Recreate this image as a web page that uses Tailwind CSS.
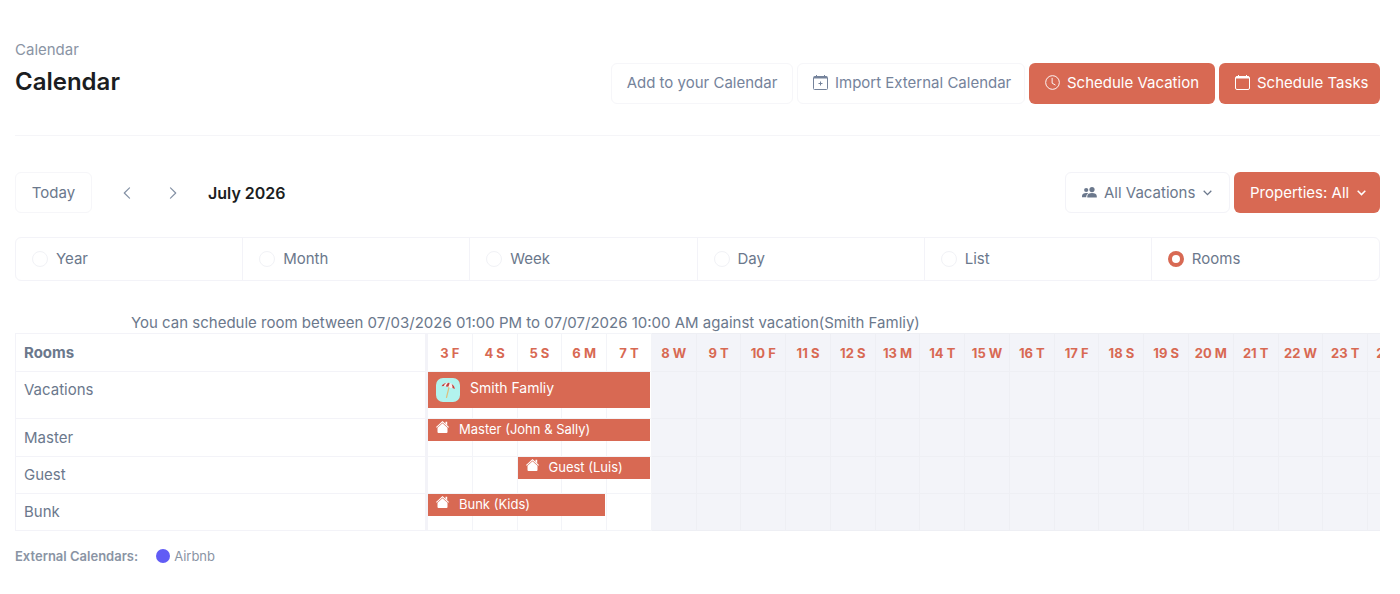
<!DOCTYPE html>
<html lang="en">
<head>
<meta charset="utf-8">
<meta name="viewport" content="width=device-width, initial-scale=1">
<title>Calendar</title>
<script src="https://cdn.jsdelivr.net/npm/@tailwindcss/browser@4"></script>
</head>
<body class="bg-white font-[Inter,'Liberation_Sans',sans-serif] text-[15px] leading-5 text-[#6b788c]">
<main class="pt-10 pr-5 pl-[15px]">
  <header class="flex items-end justify-between border-b border-[#f5f5f8] pb-[31px]">
    <div class="pb-1">
      <nav aria-label="Breadcrumb"><a href="#" class="text-[#8a94a4]">Calendar</a></nav>
      <h1 class="mt-1 text-2xl leading-9 font-semibold text-[#1b1d21]">Calendar</h1>
    </div>
    <div class="flex gap-1">
      <button class="flex h-[41px] w-[182px] items-center justify-center rounded-md border border-[#f6f6f9] pb-0.5 text-[#75839b] whitespace-nowrap">Add to your Calendar</button>
      <button class="flex h-[41px] w-[228px] items-center gap-[7px] rounded-md border border-[#f6f6f9] pb-0.5 pl-[15px] text-[#75839b] whitespace-nowrap">
        <svg class="size-[15px] shrink-0" viewBox="0 0 15 15" fill="none" stroke="currentColor"><rect x=".5" y="1.500" width="14" height="13" rx="1"/><path d="M1 2.500h13" stroke-width="2"/><path d="M3.500 0v2M11.500 0v2M7.500 6.500v4M5.500 8.500h4"/></svg>
        Import External Calendar</button>
      <button class="flex h-[41px] w-[186px] items-center gap-[7px] rounded-md bg-[#d86953] pb-0.5 pl-4 text-white whitespace-nowrap">
        <svg class="size-[15px] shrink-0" viewBox="0 0 16 16" fill="none" stroke="currentColor"><circle cx="8" cy="8" r="7.3"/><path d="M7.6 3.5v5.2l3.2 1.9" stroke-linecap="round"/></svg>
        Schedule Vacation</button>
      <button class="flex h-[41px] w-[161px] items-center gap-[7px] rounded-md bg-[#d86953] pb-0.5 pl-4 text-white whitespace-nowrap">
        <svg class="size-[15px] shrink-0" viewBox="0 0 15 15" fill="none" stroke="currentColor"><rect x=".5" y="1.500" width="14" height="13" rx="1.500"/><path d="M1 2.500h13" stroke-width="2"/><path d="M3.500 0v2M11.500 0v2"/></svg>
        Schedule Tasks</button>
    </div>
  </header>

  <div class="mt-9 flex items-center justify-between">
    <div class="flex items-center">
      <button class="h-[41px] w-[77px] rounded-md border border-[#f6f6f9]">Today</button>
      <button class="ml-3 flex h-[41px] w-[46px] items-center justify-center" aria-label="Previous month"><svg class="h-3 w-2" viewBox="0 0 8 12" fill="none" stroke="#8491a5" stroke-width="1.2" stroke-linecap="round" stroke-linejoin="round"><path d="M6.5 .8 1.3 6l5.2 5.2"/></svg></button>
      <button class="flex h-[41px] w-[46px] items-center justify-center" aria-label="Next month"><svg class="h-3 w-2" viewBox="0 0 8 12" fill="none" stroke="#8491a5" stroke-width="1.2" stroke-linecap="round" stroke-linejoin="round"><path d="M1.5 .8 6.7 6l-5.2 5.2"/></svg></button>
      <h2 class="ml-3 text-base font-semibold text-[#1b1d21]">July 2026</h2>
    </div>
    <div class="flex gap-1">
      <button class="flex h-[41px] w-[165px] items-center rounded-md border border-[#f3f3f8] pl-4 whitespace-nowrap">
        <svg class="mr-[7px] h-[11px] w-[15px] shrink-0" viewBox="0 0 15 11" fill="currentColor"><circle cx="4.2" cy="3" r="2.1"/><circle cx="10" cy="2.6" r="2.6"/><path d="M0 10.2V9c0-1.900 1.800-3 4.200-3 .8 0 1.500.1 2.100.3C4.800 7.200 4.200 8.500 4.200 10.200zM5.300 10.500V9.200c0-2 2-3.200 4.700-3.200s4.800 1.200 4.800 3.200v1.300z"/></svg>
        All Vacations
        <svg class="ml-2 h-[6px] w-[9px] shrink-0" viewBox="0 0 9 6" fill="none" stroke="currentColor" stroke-width="1.3"><path d="M.7.8l3.800 3.800L8.300.8"/></svg></button>
      <button class="flex h-[41px] w-[146px] items-center rounded-md bg-[#d86953] pl-4 text-white whitespace-nowrap">Properties: All
        <svg class="ml-2 h-[6px] w-[9px] shrink-0" viewBox="0 0 9 6" fill="none" stroke="currentColor" stroke-width="1.5"><path d="M.7.8l3.800 3.800L8.300.8"/></svg></button>
    </div>
  </div>

  <fieldset class="mt-6 grid grid-cols-6 divide-x divide-[#f3f3f8] rounded-md border border-[#f3f3f8]">
    <label class="flex h-[42px] items-center gap-2 pl-4"><input type="radio" name="view" class="size-4 appearance-none rounded-full border border-[#f1f2f6] checked:border-4 checked:border-[#d86953]">Year</label>
    <label class="flex h-[42px] items-center gap-2 pl-4"><input type="radio" name="view" class="size-4 appearance-none rounded-full border border-[#f1f2f6] checked:border-4 checked:border-[#d86953]">Month</label>
    <label class="flex h-[42px] items-center gap-2 pl-4"><input type="radio" name="view" class="size-4 appearance-none rounded-full border border-[#f1f2f6] checked:border-4 checked:border-[#d86953]">Week</label>
    <label class="flex h-[42px] items-center gap-2 pl-4"><input type="radio" name="view" class="size-4 appearance-none rounded-full border border-[#f1f2f6] checked:border-4 checked:border-[#d86953]">Day</label>
    <label class="flex h-[42px] items-center gap-2 pl-4"><input type="radio" name="view" class="size-4 appearance-none rounded-full border border-[#f1f2f6] checked:border-4 checked:border-[#d86953]">List</label>
    <label class="flex h-[42px] items-center gap-2 pl-4"><input type="radio" name="view" checked class="size-4 appearance-none rounded-full border border-[#f1f2f6] checked:border-4 checked:border-[#d86953]">Rooms</label>
  </fieldset>

  <p class="mt-8 pl-[116px]">You can schedule room between 07/03/2026 01:00 PM to 07/07/2026 10:00 AM against vacation(Smith Famliy)</p>

  <div class="overflow-hidden">
    <table class="w-[1398px] table-fixed border-separate border-spacing-0 text-left [&_td]:border-b [&_td]:border-[#f3f4f8] [&_td]:p-0 [&_tbody_th]:border-r-3 [&_tbody_th]:border-b [&_tbody_th]:border-l [&_tbody_th]:border-[#f3f3f8] [&_tbody_th]:px-2 [&_tbody_th]:font-normal">
      <thead>
        <tr id="days" class="h-[39px]">
          <th scope="col" class="w-[413px] border-y border-r-3 border-l border-[#f3f3f8] px-2 font-bold">Rooms</th>
        </tr>
      </thead>
      <tbody>
        <tr class="h-[47px]">
          <th scope="row" class="pt-2 align-top">Vacations</th>
          <td class="relative border-r align-top"><a href="#" class="absolute top-0 left-0 z-10 flex h-9 w-[222px] items-center gap-[10px] bg-[#d86953] pl-2 text-sm text-white">
            <svg class="size-6" viewBox="0 0 24 24"><rect width="24" height="24" rx="7" fill="#b2f3ee"/><path d="M13.300 8 10.500 19.500" stroke="#dcbf7e" stroke-width="1.200" stroke-linecap="round"/><path d="M5.500 8.200C7.300 5.400 10.400 4.200 13.600 5c3 .8 5 3 5.200 6l-2.300-.9-2.200-.1-2-1.200-2.500-.2-1.900-.7z" fill="#f7efee"/><path d="M5.500 8.200C6.700 6.300 8.400 5.200 10.300 4.800 9 5.800 8.200 6.800 7.900 7.900zM12 4.800l1.600.2c-.3 1.300-.7 2.500-1.300 3.800l-2.500-.2c.4-1.500 1.100-2.800 2.200-3.800zM15.600 5.900c2 1.100 3.100 2.800 3.200 5.100l-2.300-.9c.1-1.600-.2-3-.9-4.200z" fill="#bf4540"/></svg>
            <span class="pb-1">Smith Famliy</span></a></td>
        </tr>
        <tr class="h-[38px]">
          <th scope="row">Master</th>
          <td class="relative border-r"><a href="#" class="absolute top-0 left-0 z-10 flex h-[22px] w-[222px] items-center gap-[10px] bg-[#d86953] pb-0.5 pl-2 text-[13px] text-white"><svg class="mb-1 h-3 w-[13px]" viewBox="0 0 13 12" fill="currentColor"><path d="M6.500 0 13 6l-.7.7L6.500 1.500.7 6.700 0 6 2.500 3.700z"/><path d="M9.500.8h1.700v3.400L9.500 2.700zM6.500 2.300 11.500 6.800V11q0 1-1 1h-8q-1 0-1-1V6.800z"/></svg>Master (John &amp; Sally)</a></td>
        </tr>
        <tr class="h-[37px]">
          <th scope="row">Guest</th>
          <td class="border-r"></td><td class="border-r"></td>
          <td class="relative border-r"><a href="#" class="absolute top-0 left-0 z-10 flex h-[22px] w-[132px] items-center gap-[10px] bg-[#d86953] pb-0.5 pl-2 text-[13px] text-white"><svg class="mb-1 h-3 w-[13px]" viewBox="0 0 13 12" fill="currentColor"><path d="M6.500 0 13 6l-.7.7L6.500 1.500.7 6.700 0 6 2.500 3.700z"/><path d="M9.500.8h1.700v3.400L9.500 2.700zM6.500 2.300 11.500 6.800V11q0 1-1 1h-8q-1 0-1-1V6.800z"/></svg>Guest (Luis)</a></td>
        </tr>
        <tr class="h-[37px]">
          <th scope="row">Bunk</th>
          <td class="relative border-r"><a href="#" class="absolute top-0 left-0 z-10 flex h-[22px] w-[177px] items-center gap-[10px] bg-[#d86953] pb-0.5 pl-2 text-[13px] text-white"><svg class="mb-1 h-3 w-[13px]" viewBox="0 0 13 12" fill="currentColor"><path d="M6.500 0 13 6l-.7.7L6.500 1.500.7 6.700 0 6 2.500 3.700z"/><path d="M9.500.8h1.700v3.400L9.500 2.700zM6.500 2.300 11.500 6.800V11q0 1-1 1h-8q-1 0-1-1V6.800z"/></svg>Bunk (Kids)</a></td>
        </tr>
      </tbody>
    </table>
  </div>

  <footer class="mt-[15px] flex items-center text-[13px] text-[#8a94a4]">
    <strong class="font-semibold">External Calendars:</strong>
    <span class="ml-[18px] flex items-center gap-1"><span class="size-[14px] rounded-full bg-[#615cf5]"></span>Airbnb</span>
  </footer>
</main>
<script>
  // Day columns 3 to 24; days after the 7th lie outside the vacation.
  const outside = 'bg-[#f3f4f9]';
  const outsideLine = 'border-[#eeeff4]!';
  const dayRow = document.getElementById('days');
  for (let day = 3; day <= 24; day++) {
    const th = document.createElement('th');
    th.scope = 'col';
    th.className = 'border-y border-r border-[#f3f4f8] p-0 text-center text-[13px] font-bold whitespace-nowrap text-[#d86953]';
    if (day > 7) th.classList.add(outside, outsideLine);
    th.textContent = day + ' ' + 'SMTWTFS'[(day + 2) % 7];
    dayRow.append(th);
  }
  document.querySelectorAll('tbody tr').forEach(row => {
    while (row.cells.length < 23) {
      const td = document.createElement('td');
      td.className = 'border-r';
      if (row.cells.length > 5) td.classList.add(outside, outsideLine);
      row.append(td);
    }
  });
</script>
</body>
</html>
